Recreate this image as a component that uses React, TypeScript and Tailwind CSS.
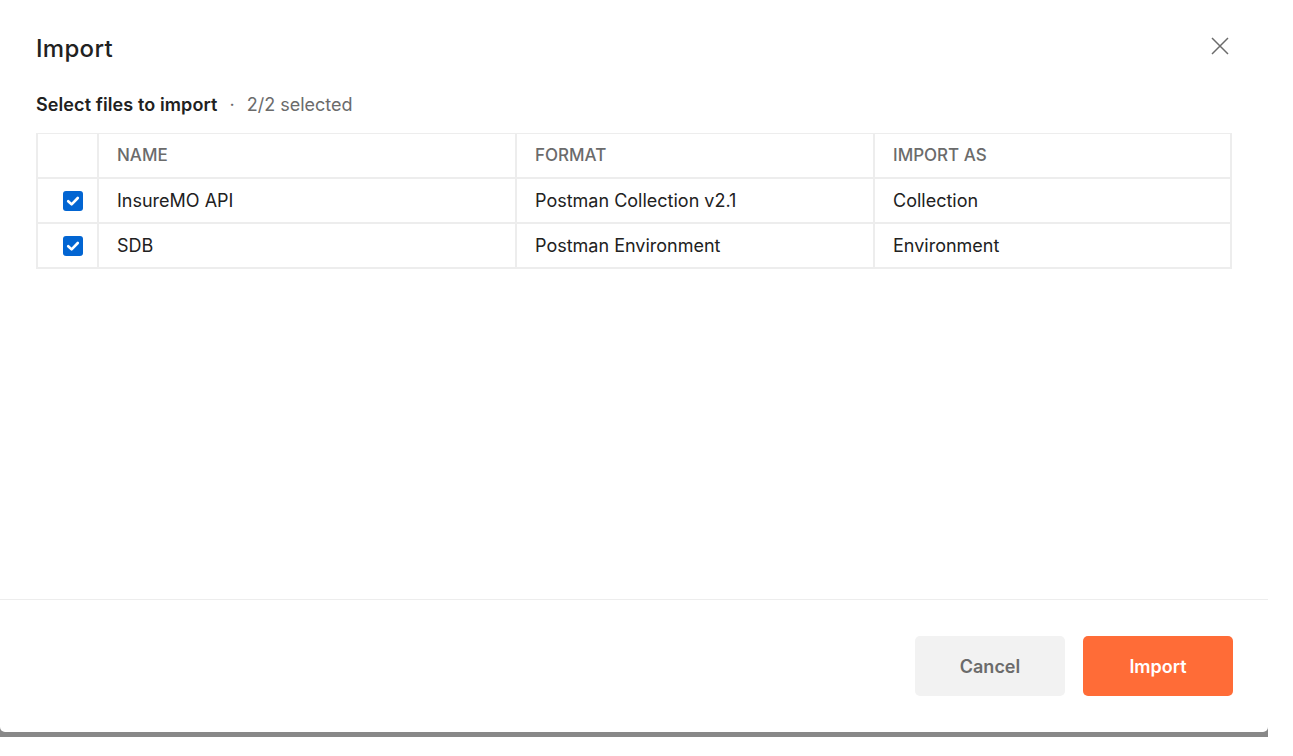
const rows = [
  { name: "InsureMO API", format: "Postman Collection v2.1", as: "Collection" },
  { name: "SDB", format: "Postman Environment", as: "Environment" },
];

function Check() {
  return (
    <div className="flex h-5 w-5 items-center justify-center rounded-[3px] bg-[#0265d2]">
      <svg width="20" height="20" viewBox="0 0 20 20" fill="none">
        <polyline points="5.2,10.2 8.6,13.4 14.8,7" stroke="#fff" strokeWidth="2.6" strokeLinecap="round" strokeLinejoin="round" />
      </svg>
    </div>
  );
}

const cell = "flex h-[45px] items-center border border-[#ededed] pl-[18px]";

export default function App() {
  return (
    <div className="min-h-screen bg-white font-['Inter',sans-serif]">
      <div className="w-[1268px] bg-[#888888] pb-[5px]">
        <div className="flex h-[732px] flex-col rounded-b-[5px] bg-white">
          {/* Body */}
          <div className="flex-1 px-9 pt-[33px]">
            <div className="flex items-start justify-between">
              <h1 className="text-[24px] font-medium leading-8 tracking-[0.3px] text-[#212121]">Import</h1>
              <button className="mr-[3px] mt-[4px] text-[#6b6b6b]">
                <svg width="18" height="18" viewBox="0 0 18 18" fill="none">
                  <path d="M1 1L17 17M17 1L1 17" stroke="currentColor" strokeWidth="1.5" />
                </svg>
              </button>
            </div>

            <div className="mt-[28px] flex items-center text-[18px] leading-6">
              <span className="font-semibold tracking-[0.1px] text-[#212121]">Select files to import</span>
              <span className="mx-[12px] text-[#6b6b6b]">·</span>
              <span className="text-[#6b6b6b]">2/2 selected</span>
            </div>

            <div className="mt-[16px] w-[1196px] border-x border-b border-[#ededed]">
              <div className="grid grid-cols-[61px_418px_358px_1fr] text-[17px] font-medium uppercase text-[#6b6b6b]">
                <div className={cell} />
                <div className={cell}>Name</div>
                <div className={cell}>Format</div>
                <div className={cell}>Import as</div>
              </div>
              {rows.map((r) => (
                <div key={r.name} className="grid grid-cols-[61px_418px_358px_1fr] text-[18px] text-[#212121]">
                  <div className="flex h-[45px] items-center border border-[#ededed] pl-[25px]">
                    <Check />
                  </div>
                  <div className={cell}>{r.name}</div>
                  <div className={cell}>{r.format}</div>
                  <div className={cell}>{r.as}</div>
                </div>
              ))}
            </div>
          </div>

          {/* Footer */}
          <div className="flex justify-end gap-[18px] border-t border-[#ededed] py-9 pr-[35px]">
            <button className="h-[60px] w-[150px] rounded-[5px] bg-[#f2f2f2] text-[18px] font-semibold text-[#6b6b6b]">
              Cancel
            </button>
            <button className="h-[60px] w-[150px] rounded-[5px] bg-[#ff6c37] text-[18px] font-semibold text-white">
              Import
            </button>
          </div>
        </div>
      </div>
    </div>
  );
}
